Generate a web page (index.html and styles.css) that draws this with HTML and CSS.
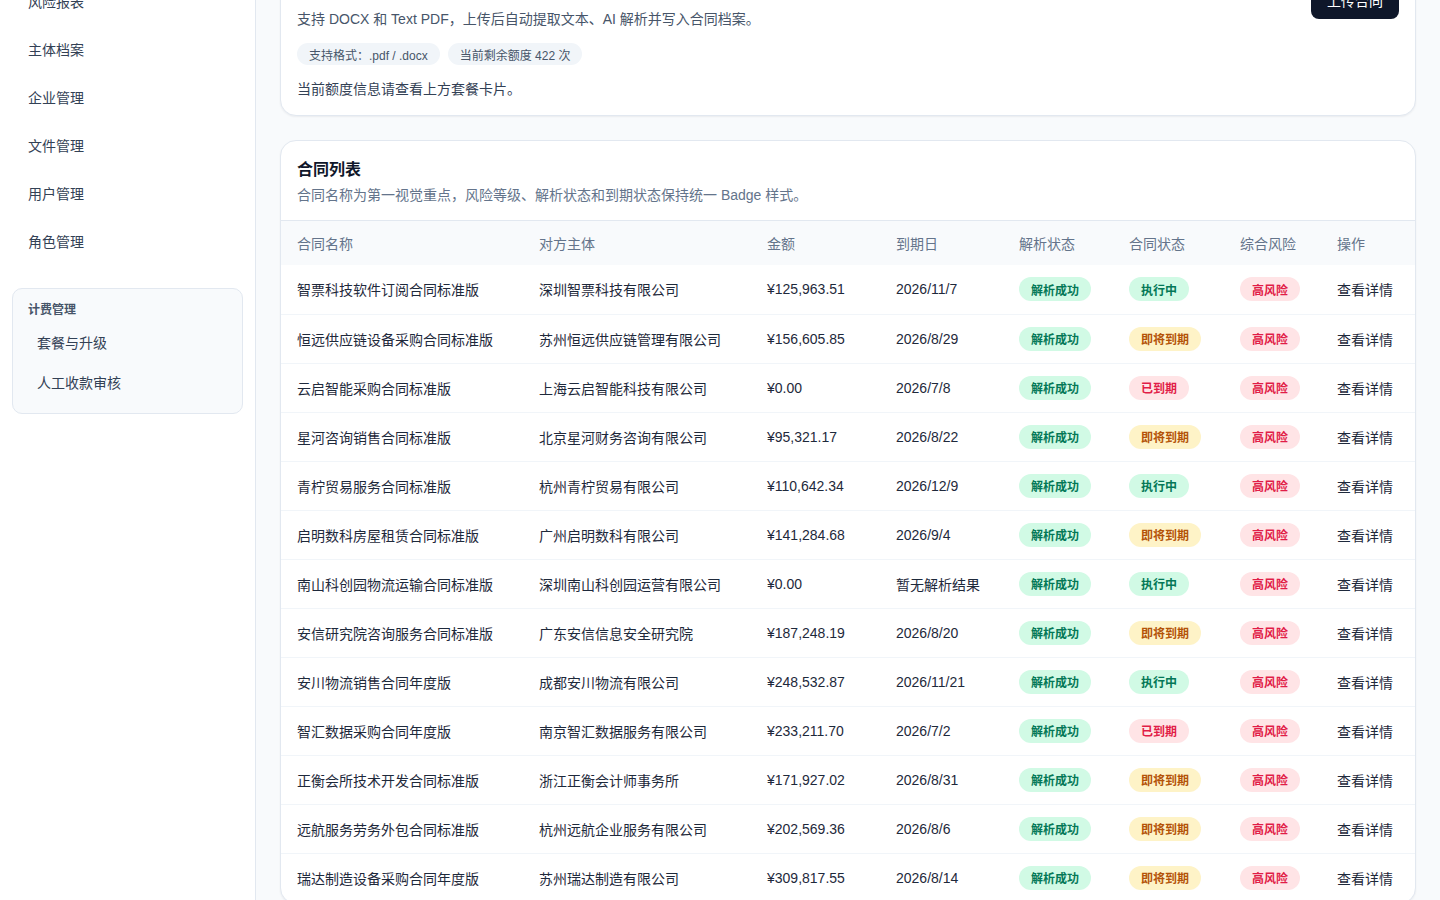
FILE: index.html
```html
<!DOCTYPE html>
<html lang="zh-CN">
<head>
    <meta charset="UTF-8">
    <meta name="viewport" content="width=device-width, initial-scale=1.0">
    <title>合同列表</title>
    <link rel="stylesheet" href="styles.css">
</head>
<body>
    <div class="layout">
        <aside class="sidebar">
            <nav class="nav">
                <a class="nav-item">风险报表</a>
                <a class="nav-item">主体档案</a>
                <a class="nav-item">企业管理</a>
                <a class="nav-item">文件管理</a>
                <a class="nav-item">用户管理</a>
                <a class="nav-item">角色管理</a>
            </nav>
            <div class="nav-group">
                <div class="nav-group-title">计费管理</div>
                <a class="nav-sub">套餐与升级</a>
                <a class="nav-sub">人工收款审核</a>
            </div>
        </aside>

        <main class="main">
            <section class="card upload-card">
                <div class="upload-info">
                    <h2>上传合同文件</h2>
                    <p class="desc">支持 DOCX 和 Text PDF，上传后自动提取文本、AI 解析并写入合同档案。</p>
                    <div class="chips">
                        <span class="chip">支持格式：.pdf / .docx</span>
                        <span class="chip">当前剩余额度 422 次</span>
                    </div>
                    <p class="note">当前额度信息请查看上方套餐卡片。</p>
                </div>
                <button class="btn-primary">上传合同</button>
            </section>

            <section class="card list-card">
                <div class="list-head">
                    <h2>合同列表</h2>
                    <p>合同名称为第一视觉重点，风险等级、解析状态和到期状态保持统一 Badge 样式。</p>
                </div>
                <table class="contract-table">
                    <colgroup>
                        <col style="width:242px">
                        <col style="width:228px">
                        <col style="width:129px">
                        <col style="width:123px">
                        <col style="width:110px">
                        <col style="width:111px">
                        <col style="width:97px">
                        <col>
                    </colgroup>
                    <thead>
                        <tr>
                            <th>合同名称</th>
                            <th>对方主体</th>
                            <th>金额</th>
                            <th>到期日</th>
                            <th>解析状态</th>
                            <th>合同状态</th>
                            <th>综合风险</th>
                            <th>操作</th>
                        </tr>
                    </thead>
                    <tbody id="contract-rows"></tbody>
                </table>
            </section>
        </main>
    </div>

    <script>
        // Contract data
        const contracts = [
            ['智票科技软件订阅合同标准版', '深圳智票科技有限公司', '¥125,963.51', '2026/11/7', 'active'],
            ['恒远供应链设备采购合同标准版', '苏州恒远供应链管理有限公司', '¥156,605.85', '2026/8/29', 'soon'],
            ['云启智能采购合同标准版', '上海云启智能科技有限公司', '¥0.00', '2026/7/8', 'expired'],
            ['星河咨询销售合同标准版', '北京星河财务咨询有限公司', '¥95,321.17', '2026/8/22', 'soon'],
            ['青柠贸易服务合同标准版', '杭州青柠贸易有限公司', '¥110,642.34', '2026/12/9', 'active'],
            ['启明数科房屋租赁合同标准版', '广州启明数科有限公司', '¥141,284.68', '2026/9/4', 'soon'],
            ['南山科创园物流运输合同标准版', '深圳南山科创园运营有限公司', '¥0.00', '暂无解析结果', 'active'],
            ['安信研究院咨询服务合同标准版', '广东安信信息安全研究院', '¥187,248.19', '2026/8/20', 'soon'],
            ['安川物流销售合同年度版', '成都安川物流有限公司', '¥248,532.87', '2026/11/21', 'active'],
            ['智汇数据采购合同年度版', '南京智汇数据服务有限公司', '¥233,211.70', '2026/7/2', 'expired'],
            ['正衡会所技术开发合同标准版', '浙江正衡会计师事务所', '¥171,927.02', '2026/8/31', 'soon'],
            ['远航服务劳务外包合同标准版', '杭州远航企业服务有限公司', '¥202,569.36', '2026/8/6', 'soon'],
            ['瑞达制造设备采购合同年度版', '苏州瑞达制造有限公司', '¥309,817.55', '2026/8/14', 'soon']
        ];

        const statusBadge = {
            active: '<span class="badge badge-green">执行中</span>',
            soon: '<span class="badge badge-amber">即将到期</span>',
            expired: '<span class="badge badge-red">已到期</span>'
        };

        function renderContracts() {
            const tbody = document.getElementById('contract-rows');
            tbody.innerHTML = '';
            contracts.forEach(c => {
                const tr = document.createElement('tr');
                tr.innerHTML = `
                    <td>${c[0]}</td>
                    <td>${c[1]}</td>
                    <td>${c[2]}</td>
                    <td>${c[3]}</td>
                    <td><span class="badge badge-green">解析成功</span></td>
                    <td>${statusBadge[c[4]]}</td>
                    <td><span class="badge badge-red">高风险</span></td>
                    <td><a class="link">查看详情</a></td>
                `;
                tbody.appendChild(tr);
            });
        }

        renderContracts();
    </script>
</body>
</html>
```

FILE: styles.css
```css
* {
    box-sizing: border-box;
}
body {
    margin: 0;
    font-family: "Liberation Sans", "Noto Sans CJK SC", sans-serif;
    font-size: 14px;
    color: #1e293b;
    background-color: #f8fafc;
    height: 900px;
    overflow: hidden;
}
p, h2 {
    margin: 0;
}
.layout {
    display: flex;
    min-height: 900px;
}

/* Sidebar */
.sidebar {
    width: 256px;
    flex-shrink: 0;
    background-color: #fff;
    border-right: 1px solid #e2e8f0;
    padding: 12px;
}
.nav {
    display: flex;
    flex-direction: column;
    gap: 8px;
    margin-top: -31px;
}
.nav-item {
    display: flex;
    align-items: center;
    height: 40px;
    padding: 0 16px;
    color: #334155;
    border-radius: 8px;
}
.nav-group {
    margin-top: 27px;
    background-color: #f8fafc;
    border: 1px solid #e2e8f0;
    border-radius: 10px;
    padding: 13px 8px;
    display: flex;
    flex-direction: column;
    gap: 4px;
}
.nav-group-title {
    font-size: 12px;
    line-height: 16px;
    font-weight: 700;
    color: #475569;
    padding: 0 7px;
    margin-bottom: 2px;
}
.nav-sub {
    display: flex;
    align-items: center;
    height: 36px;
    padding: 0 16px;
    color: #334155;
}

/* Main */
.main {
    flex: 1;
    padding: 0 24px;
    display: flex;
    flex-direction: column;
    gap: 24px;
}
.card {
    background-color: #fff;
    border: 1px solid #e2e8f0;
    border-radius: 16px;
    box-shadow: 0 1px 2px rgba(15, 23, 42, 0.06);
}
.upload-card {
    margin-top: -40px;
    padding: 20px 16px 16px;
    display: flex;
    justify-content: space-between;
    align-items: flex-start;
}
.upload-info h2 {
    font-size: 16px;
    line-height: 24px;
    color: #0f172a;
    margin-bottom: 4px;
}
.desc {
    line-height: 20px;
    color: #475569;
}
.chips {
    display: flex;
    gap: 8px;
    margin-top: 14px;
}
.chip {
    display: inline-flex;
    align-items: center;
    height: 22px;
    padding: 0 12px;
    border-radius: 999px;
    background-color: #f1f5f9;
    color: #475569;
    font-size: 12px;
}
.note {
    margin-top: 14px;
    line-height: 20px;
    color: #334155;
}
.btn-primary {
    height: 38px;
    padding: 0 16px;
    border: none;
    border-radius: 8px;
    background-color: #0f172a;
    color: #fff;
    font-family: inherit;
    font-size: 14px;
    cursor: pointer;
}

/* Contract list */
.list-card {
    overflow: hidden;
}
.list-head {
    padding: 17px 16px 15px;
    border-bottom: 1px solid #e2e8f0;
}
.list-head h2 {
    font-size: 16px;
    line-height: 24px;
    color: #0f172a;
    margin-bottom: 3px;
}
.list-head p {
    line-height: 20px;
    color: #64748b;
}
.contract-table {
    width: 100%;
    border-collapse: collapse;
    table-layout: fixed;
}
.contract-table th {
    height: 44px;
    padding: 0 0 0 16px;
    background-color: #f8fafc;
    color: #64748b;
    font-weight: 400;
    text-align: left;
}
.contract-table td {
    height: 49px;
    padding: 0 0 0 16px;
    border-bottom: 1px solid #f1f5f9;
    color: #1e293b;
    white-space: nowrap;
}
.badge {
    display: inline-flex;
    align-items: center;
    height: 24px;
    padding: 0 12px;
    border-radius: 999px;
    font-size: 12px;
    font-weight: 700;
}
.badge-green {
    background-color: #d1fae5;
    color: #047857;
}
.badge-amber {
    background-color: #fef3c7;
    color: #b45309;
}
.badge-red {
    background-color: #ffe4e6;
    color: #e11d48;
}
.link {
    color: #1e293b;
    cursor: pointer;
}
```
